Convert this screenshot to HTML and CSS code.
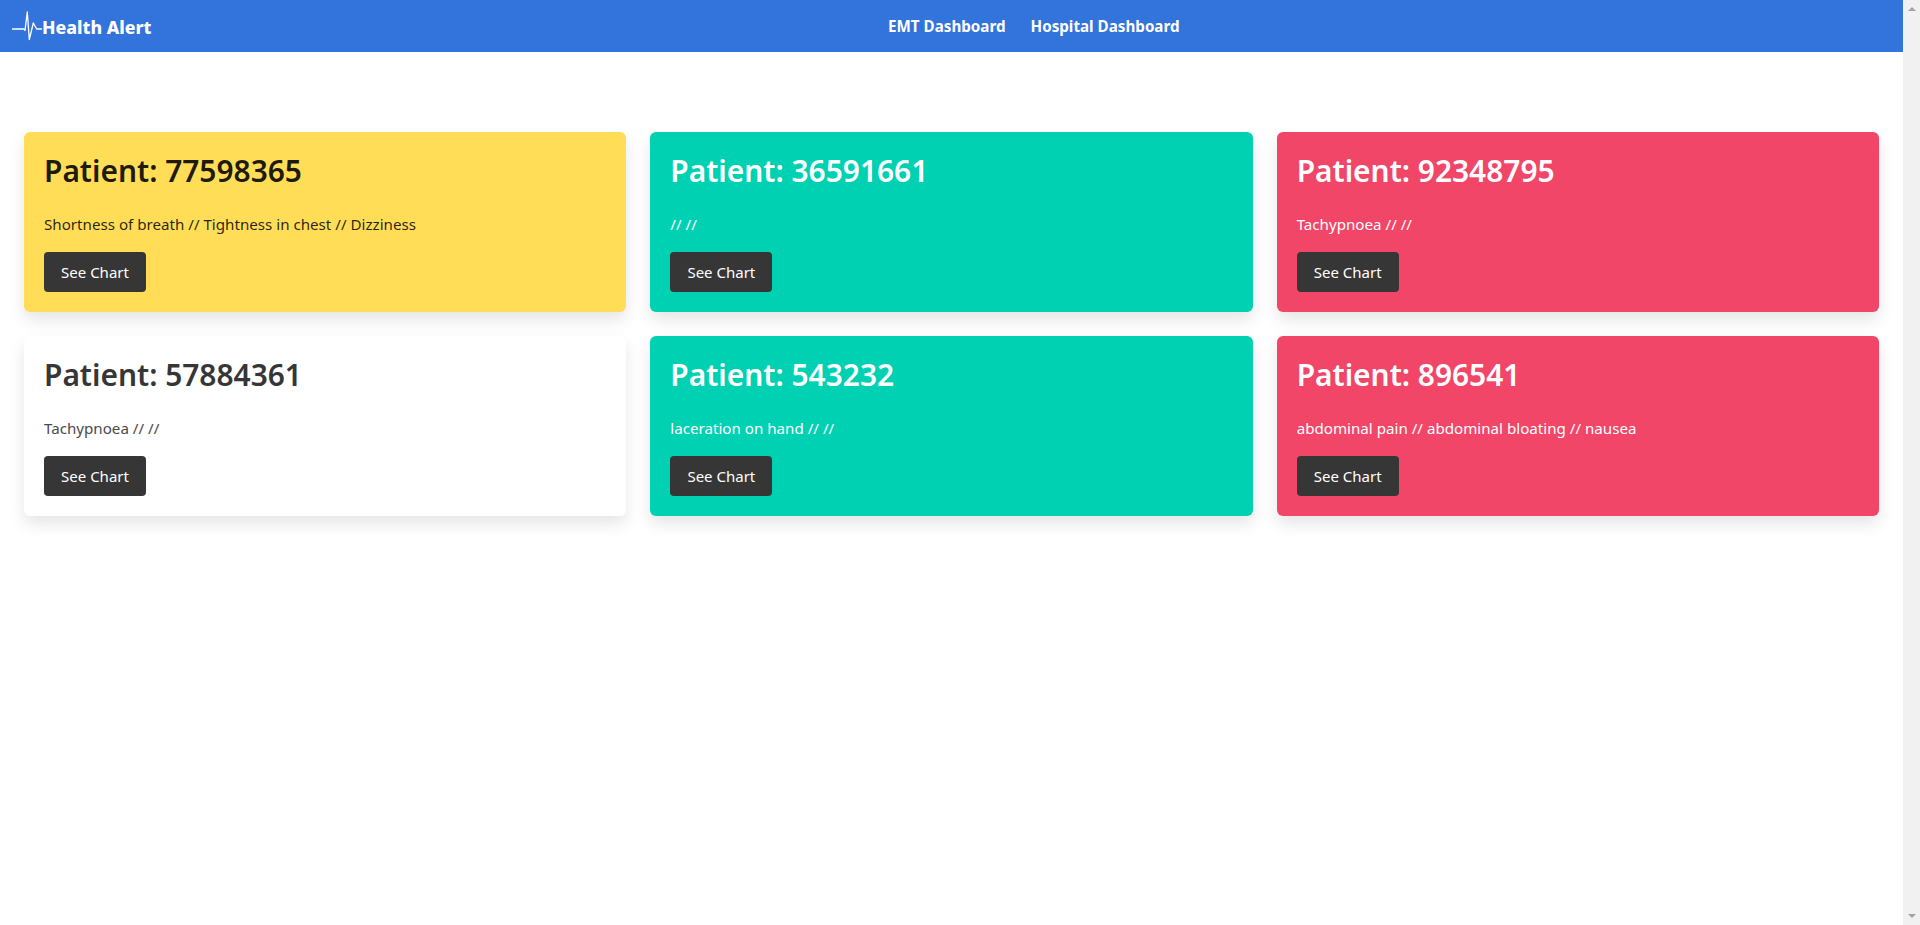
FILE: index.html
```html
<!DOCTYPE html>
<html lang="en">
<head>
<meta charset="utf-8">
<title>Health Alert</title>
<link rel="stylesheet" href="styles.css">
</head>
<body>
<div class="page">
  <nav class="navbar">
    <a class="brand" href="#">
      <svg class="brand-icon" width="30" height="30" viewBox="0 0 30 30" fill="none" stroke="#fff" stroke-width="1.3" stroke-linejoin="round" stroke-linecap="round"><path d="M.5 18H12L13 19.500L15.300 1L17.300 28.500L21.300 12L24.700 18H30"/></svg>
      <span class="brand-name">Health Alert</span>
    </a>
    <div class="nav-links">
      <a class="nav-link" href="#">EMT Dashboard</a>
      <a class="nav-link" href="#">Hospital Dashboard</a>
    </div>
  </nav>
  <main class="grid">
    <article class="card yellow">
      <h2 class="card-title">Patient: 77598365</h2>
      <p class="card-text">Shortness of breath // Tightness in chest // Dizziness</p>
      <a class="btn" href="#">See Chart</a>
    </article>
    <article class="card green">
      <h2 class="card-title">Patient: 36591661</h2>
      <p class="card-text">// //</p>
      <a class="btn" href="#">See Chart</a>
    </article>
    <article class="card red">
      <h2 class="card-title">Patient: 92348795</h2>
      <p class="card-text">Tachypnoea // //</p>
      <a class="btn" href="#">See Chart</a>
    </article>
    <article class="card white">
      <h2 class="card-title">Patient: 57884361</h2>
      <p class="card-text">Tachypnoea // //</p>
      <a class="btn" href="#">See Chart</a>
    </article>
    <article class="card green">
      <h2 class="card-title">Patient: 543232</h2>
      <p class="card-text">laceration on hand // //</p>
      <a class="btn" href="#">See Chart</a>
    </article>
    <article class="card red">
      <h2 class="card-title">Patient: 896541</h2>
      <p class="card-text">abdominal pain // abdominal bloating // nausea</p>
      <a class="btn" href="#">See Chart</a>
    </article>
  </main>
</div>
<div class="scrollbar" aria-hidden="true">
  <span class="arrow-up"></span>
  <span class="arrow-down"></span>
</div>
</body>
</html>
```
FILE: styles.css
```css
* { box-sizing: border-box; }
html, body { height: 100%; }
body {
  margin: 0;
  display: flex;
  overflow: hidden;
  background: #fff;
  color: #4a4a4a;
  font-family: "Noto Sans", "Open Sans", sans-serif;
  font-size: 16px;
}
a { text-decoration: none; color: inherit; }
.page { flex: 1; min-width: 0; }
.navbar {
  height: 52px;
  background: #3273dc;
  display: flex;
  align-items: center;
  padding-left: 12px;
}
.brand {
  flex: none;
  width: 140px;
  display: flex;
  align-items: center;
  color: #fff;
}
.brand-icon { display: block; }
.brand-name {
  font-size: 17.700px;
  font-weight: 800;
  line-height: 30px;
  position: relative;
  top: 1px;
}
.nav-links {
  display: flex;
  gap: 25px;
  margin-left: 736px;
}
.nav-link {
  color: #fff;
  font-size: 15.200px;
  font-weight: 700;
  line-height: 24px;
}
.grid {
  display: grid;
  grid-template-columns: repeat(3, 1fr);
  gap: 24px;
  padding: 80px 24px 0;
}
.card {
  height: 180px;
  padding: 20px;
  border-radius: 6px;
  box-shadow: 0 8px 16px rgba(10, 10, 10, .1);
}
.yellow { background: #ffdd57; color: rgba(0, 0, 0, .85); }
.green { background: #00d1b2; color: #fff; }
.red { background: #f14668; color: #fff; }
.white { background: #fff; color: #4a4a4a; }
.card-title {
  margin: 0 0 20px;
  font-size: 29.900px;
  font-weight: 600;
  line-height: 40px;
  position: relative;
  top: -1px;
}
.yellow .card-title { color: rgba(0, 0, 0, .9); }
.white .card-title { color: #363636; }
.card-text {
  margin: 0;
  font-size: 15.150px;
  line-height: 24px;
}
.btn {
  display: inline-flex;
  align-items: center;
  justify-content: center;
  width: 102px;
  height: 40px;
  margin-top: 16px;
  border-radius: 4px;
  background: #363636;
  color: #fff;
  font-size: 15px;
}
.scrollbar {
  flex: none;
  width: 17px;
  background: #f1f1f1;
  display: flex;
  flex-direction: column;
  justify-content: space-between;
  align-items: center;
  padding: 7px 0;
}
.arrow-up, .arrow-down {
  width: 0;
  height: 0;
  border-left: 4px solid transparent;
  border-right: 4px solid transparent;
}
.arrow-up { border-bottom: 4px solid #a3a3a3; }
.arrow-down { border-top: 4px solid #a3a3a3; }
```
